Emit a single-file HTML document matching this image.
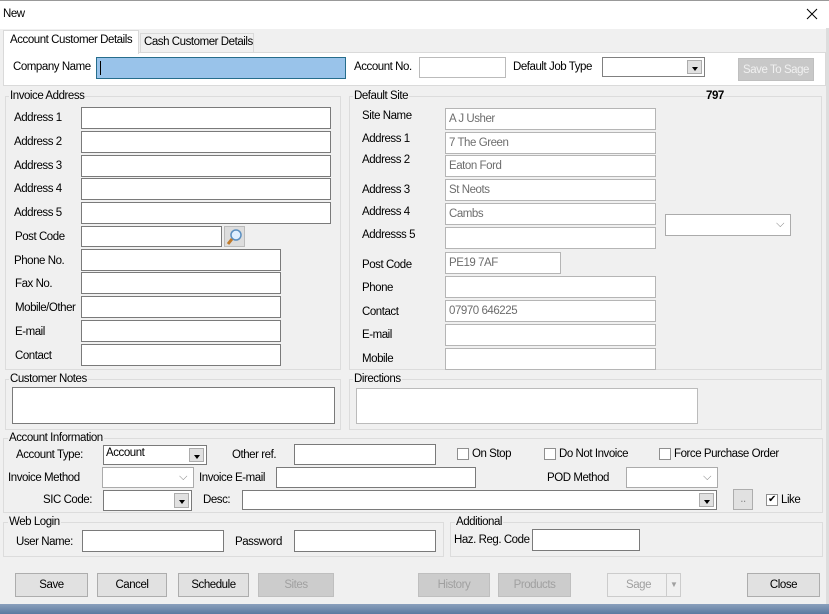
<!DOCTYPE html>
<html><head><style>
*{box-sizing:border-box;margin:0;padding:0}
body{width:829px;height:614px;background:#f0f0f0;font-family:"Liberation Sans",sans-serif;font-size:11.5px;color:#000;position:relative;overflow:hidden;letter-spacing:-0.45px}
.a{position:absolute;white-space:nowrap}
.t{position:absolute;line-height:14px;white-space:nowrap}
.i{position:absolute;background:#fff;border:1px solid #7a7a7a}
.j{position:absolute;background:#fff;border:1px solid #b5b5b5;color:#6d6d6d;padding:3px 3px;line-height:14px}
.g{position:absolute;border:1px solid #dcdcdc}
.gl{position:absolute;background:#f0f0f0;padding:0 1px;line-height:14px}
.b{position:absolute;background:#e1e1e1;border:1px solid #adadad;text-align:center;line-height:22px}
.d{color:#a0a0a0;background:#cccccc;border-color:#bfbfbf}
.cb{position:absolute;width:12px;height:12px;border:1px solid #8f8f8f;background:#fff}
.arr{position:absolute;top:2px;right:2px;width:15px;bottom:2px;background:#e1e1e1;border:1px solid #acacac}
.arr:after{content:"";position:absolute;left:4px;top:6px;border:3px solid transparent;border-top:4px solid #000}
.chev{position:absolute;right:6px;top:3px;color:#777;font-size:11px}
</style></head><body>
<div class="a" style="left:0;top:0;width:829px;height:29px;background:#fff;border-top:1px solid #999"></div>
<div class="t" style="left:3px;top:7px">New</div>
<svg class="a" style="left:806px;top:8px" width="12" height="12"><path d="M1 1L11 11M11 1L1 11" stroke="#000" stroke-width="1"/></svg>
<div class="a" style="left:826px;top:28px;width:3px;height:576px;background:#ddd"></div>
<!-- tabs -->
<div class="a" style="left:3px;top:52px;width:823px;height:34px;background:#fff;border:1px solid #dadada"></div>
<div class="a" style="left:140px;top:33px;width:114px;height:20px;background:#f0f0f0;border:1px solid #d9d9d9"></div>
<div class="t" style="left:144px;top:35px">Cash Customer Details</div>
<div class="a" style="left:3px;top:30px;width:136px;height:24px;background:#fff;border:1px solid #d9d9d9;border-bottom:none"></div>
<div class="t" style="left:10px;top:33px">Account Customer Details</div>
<div class="t" style="left:13px;top:60px">Company Name</div>
<div class="a" style="left:96px;top:57px;width:250px;height:22px;background:#99c3ea;border:1px solid #266d8c"></div>
<div class="a" style="left:100px;top:61px;width:1px;height:14px;background:#000"></div>
<div class="t" style="left:354px;top:60px">Account No.</div>
<div class="i" style="left:419px;top:57px;width:87px;height:21px;border-color:#bbb"></div>
<div class="t" style="left:513px;top:60px">Default Job Type</div>
<div class="i" style="left:602px;top:57px;width:103px;height:20px;border-color:#808080"><div class="arr"></div></div>
<div class="b d" style="left:738px;top:58px;width:76px;height:23px;color:#f0f0f0;background:#c8c8c8">Save To Sage</div>
<!-- groups -->
<div class="g" style="left:5px;top:96px;width:336px;height:274px"></div>
<div class="gl" style="left:9px;top:89px">Invoice Address</div>
<div class="g" style="left:349px;top:96px;width:473px;height:274px"></div>
<div class="gl" style="left:353px;top:89px">Default Site</div>
<div class="t" style="left:706px;top:89px;font-weight:bold">797</div>
<div class="t" style="left:14px;top:111px">Address 1</div><div class="i" style="left:81px;top:107px;width:250px;height:22px"></div>
<div class="t" style="left:14px;top:135px">Address 2</div><div class="i" style="left:81px;top:131px;width:250px;height:22px"></div>
<div class="t" style="left:14px;top:159px">Address 3</div><div class="i" style="left:81px;top:155px;width:250px;height:22px"></div>
<div class="t" style="left:14px;top:182px">Address 4</div><div class="i" style="left:81px;top:178px;width:250px;height:22px"></div>
<div class="t" style="left:14px;top:206px">Address 5</div><div class="i" style="left:81px;top:202px;width:250px;height:22px"></div>
<div class="t" style="left:15px;top:230px">Post Code</div><div class="i" style="left:81px;top:226px;width:141px;height:21px"></div>
<div class="a" style="left:224px;top:226px;width:21px;height:21px;background:#ddd;border:1px solid #bbb"><svg width="19" height="19"><circle cx="11" cy="8" r="5" fill="#dfefff" stroke="#5b8fc0" stroke-width="1.5"/><line x1="7" y1="12" x2="3" y2="17" stroke="#c07a2a" stroke-width="3"/></svg></div>
<div class="t" style="left:14px;top:254px">Phone No.</div><div class="i" style="left:81px;top:249px;width:200px;height:22px"></div>
<div class="t" style="left:15px;top:277px">Fax No.</div><div class="i" style="left:81px;top:272px;width:200px;height:22px"></div>
<div class="t" style="left:15px;top:301px">Mobile/Other</div><div class="i" style="left:81px;top:296px;width:200px;height:22px"></div>
<div class="t" style="left:15px;top:325px">E-mail</div><div class="i" style="left:81px;top:320px;width:200px;height:22px"></div>
<div class="t" style="left:15px;top:349px">Contact</div><div class="i" style="left:81px;top:344px;width:200px;height:22px"></div>
<!-- default site -->
<div class="t" style="left:362px;top:109px">Site Name</div><div class="j" style="left:445px;top:108px;width:211px;height:22px">A J Usher</div>
<div class="t" style="left:362px;top:132px">Address 1</div><div class="j" style="left:445px;top:132px;width:211px;height:22px">7 The Green</div>
<div class="t" style="left:362px;top:153px">Address 2</div><div class="j" style="left:445px;top:155px;width:211px;height:22px">Eaton Ford</div>
<div class="t" style="left:362px;top:183px">Address 3</div><div class="j" style="left:445px;top:179px;width:211px;height:22px">St Neots</div>
<div class="t" style="left:362px;top:205px">Address 4</div><div class="j" style="left:445px;top:203px;width:211px;height:22px">Cambs</div>
<div class="t" style="left:362px;top:228px">Addresss 5</div><div class="j" style="left:445px;top:227px;width:211px;height:22px"></div>
<div class="t" style="left:362px;top:258px">Post Code</div><div class="j" style="left:445px;top:252px;width:116px;height:22px">PE19 7AF</div>
<div class="t" style="left:362px;top:281px">Phone</div><div class="j" style="left:445px;top:276px;width:211px;height:22px"></div>
<div class="t" style="left:362px;top:305px">Contact</div><div class="j" style="left:445px;top:300px;width:211px;height:22px">07970 646225</div>
<div class="t" style="left:362px;top:328px">E-mail</div><div class="j" style="left:445px;top:324px;width:211px;height:22px"></div>
<div class="t" style="left:362px;top:352px">Mobile</div><div class="j" style="left:445px;top:348px;width:211px;height:22px"></div>
<div class="i" style="left:665px;top:214px;width:126px;height:22px;border-color:#ababab"><span class="chev">⌵</span></div>
<!-- notes -->
<div class="g" style="left:5px;top:379px;width:336px;height:51px"></div>
<div class="gl" style="left:9px;top:372px">Customer Notes</div>
<div class="i" style="left:12px;top:387px;width:323px;height:37px"></div>
<div class="g" style="left:349px;top:379px;width:473px;height:51px"></div>
<div class="gl" style="left:353px;top:372px">Directions</div>
<div class="i" style="left:356px;top:388px;width:342px;height:36px;border-color:#bbb"></div>
<!-- account info -->
<div class="g" style="left:3px;top:438px;width:820px;height:75px"></div>
<div class="gl" style="left:8px;top:431px">Account Information</div>
<div class="t" style="left:16px;top:448px">Account Type:</div>
<div class="i" style="left:103px;top:445px;width:104px;height:20px;padding:1px 2px">Account<div class="arr"></div></div>
<div class="t" style="left:232px;top:448px">Other ref.</div><div class="i" style="left:294px;top:444px;width:142px;height:21px"></div>
<div class="cb" style="left:457px;top:448px"></div><div class="t" style="left:472px;top:447px">On Stop</div>
<div class="cb" style="left:544px;top:448px"></div><div class="t" style="left:559px;top:447px">Do Not Invoice</div>
<div class="cb" style="left:659px;top:448px"></div><div class="t" style="left:674px;top:447px">Force Purchase Order</div>
<div class="t" style="left:8px;top:471px">Invoice Method</div>
<div class="i" style="left:102px;top:467px;width:92px;height:21px;border-color:#ababab"><span class="chev">⌵</span></div>
<div class="t" style="left:199px;top:471px">Invoice E-mail</div><div class="i" style="left:276px;top:467px;width:200px;height:21px"></div>
<div class="t" style="left:547px;top:471px">POD Method</div>
<div class="i" style="left:626px;top:467px;width:92px;height:21px;border-color:#ababab"><span class="chev">⌵</span></div>
<div class="t" style="left:43px;top:493px">SIC Code:</div>
<div class="i" style="left:103px;top:490px;width:89px;height:21px"><div class="arr"></div></div>
<div class="t" style="left:203px;top:493px">Desc:</div>
<div class="i" style="left:242px;top:490px;width:475px;height:20px"><div class="arr"></div></div>
<div class="b" style="left:733px;top:489px;width:20px;height:21px;line-height:18px;color:#888">..</div>
<div class="cb" style="left:766px;top:494px;font-size:10px;line-height:10px;text-align:center">✔</div>
<div class="t" style="left:781px;top:493px">Like</div>
<!-- web login -->
<div class="g" style="left:3px;top:522px;width:441px;height:35px"></div>
<div class="gl" style="left:8px;top:515px">Web Login</div>
<div class="t" style="left:16px;top:535px">User Name:</div><div class="i" style="left:82px;top:530px;width:142px;height:22px"></div>
<div class="t" style="left:235px;top:535px">Password</div><div class="i" style="left:294px;top:530px;width:142px;height:22px"></div>
<div class="g" style="left:450px;top:522px;width:373px;height:35px"></div>
<div class="gl" style="left:455px;top:515px">Additional</div>
<div class="t" style="left:454px;top:533px">Haz. Reg. Code</div><div class="i" style="left:532px;top:529px;width:108px;height:22px"></div>
<!-- buttons -->
<div class="b" style="left:15px;top:573px;width:73px;height:24px">Save</div>
<div class="b" style="left:97px;top:573px;width:70px;height:24px">Cancel</div>
<div class="b" style="left:178px;top:573px;width:71px;height:24px">Schedule</div>
<div class="b d" style="left:258px;top:573px;width:76px;height:24px">Sites</div>
<div class="b d" style="left:418px;top:573px;width:72px;height:24px">History</div>
<div class="b d" style="left:498px;top:573px;width:73px;height:24px">Products</div>
<div class="b" style="left:607px;top:573px;width:74px;height:24px;color:#a0a0a0;background:#f0f0f0;border-color:#ccc;text-align:left;padding-left:18px">Sage<span style="position:absolute;left:58px;top:0;height:22px;border-left:1px solid #ccc;padding-left:3px;font-size:8px">▼</span></div>
<div class="b" style="left:747px;top:573px;width:73px;height:24px">Close</div>
<div class="a" style="left:0;top:604px;width:829px;height:10px;background:linear-gradient(#8aa0bc,#5d7aa0)"></div>
</body></html>
